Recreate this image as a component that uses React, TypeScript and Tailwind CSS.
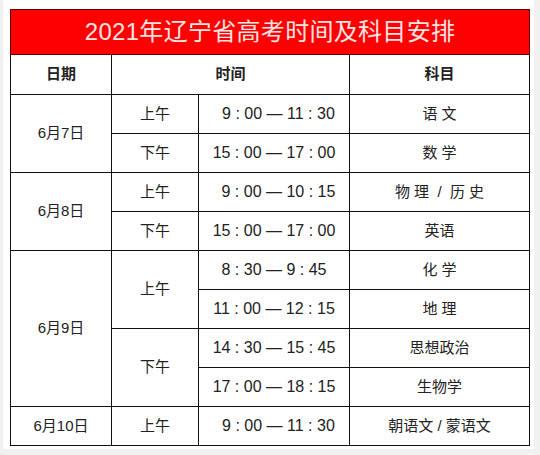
const rows: { date?: string; dateSpan?: number; half?: string; halfSpan?: number; time: string; subject: string }[] = [
  { date: '6月7日', dateSpan: 2, half: '上午', halfSpan: 1, time: '  9 : 00 — 11 : 30', subject: '语 文' },
  { half: '下午', halfSpan: 1, time: '15 : 00 — 17 : 00', subject: '数 学' },
  { date: '6月8日', dateSpan: 2, half: '上午', halfSpan: 1, time: '  9 : 00 — 10 : 15', subject: '物 理  /  历 史' },
  { half: '下午', halfSpan: 1, time: '15 : 00 — 17 : 00', subject: '英语' },
  { date: '6月9日', dateSpan: 4, half: '上午', halfSpan: 2, time: '8 : 30 — 9 : 45', subject: '化 学' },
  { time: '11 : 00 — 12 : 15', subject: '地 理' },
  { half: '下午', halfSpan: 2, time: '14 : 30 — 15 : 45', subject: '思想政治' },
  { time: '17 : 00 — 18 : 15', subject: '生物学' },
  { date: '6月10日', dateSpan: 1, half: '上午', halfSpan: 1, time: '  9 : 00 — 11 : 30', subject: '朝语文 / 蒙语文' },
];

const cell = 'border border-[#111] text-center align-middle p-0';

export default function App() {
  return (
    <div
      className="w-[540px] h-[455px] bg-[#f1f1f1] overflow-hidden"
      style={{ fontFamily: '"Liberation Sans", "Noto Sans CJK SC", sans-serif' }}
    >
      <div className="ml-[3px] w-[531px] h-[449px] bg-white pt-[9px] pl-[7px]">
        <table className="table-fixed border-collapse w-[519px] text-[15px] text-[#222]">
          <colgroup>
            <col className="w-[101px]" />
            <col className="w-[87px]" />
            <col className="w-[151px]" />
            <col className="w-[180px]" />
          </colgroup>
          <thead>
            <tr className="h-[45px]">
              <th
                colSpan={4}
                className="border border-[#600] bg-[#ff0000] text-[#ffe4e4] text-[24px] font-normal tracking-[0.3px] p-0"
              >
                2021年辽宁省高考时间及科目安排
              </th>
            </tr>
            <tr className="h-[40px]">
              <th className={`${cell} font-bold`}>日期</th>
              <th colSpan={2} className={`${cell} font-bold`}>
                时间
              </th>
              <th className={`${cell} font-bold`}>科目</th>
            </tr>
          </thead>
          <tbody>
            {rows.map((r, i) => (
              <tr key={i} className="h-[39px]">
                {r.date && (
                  <td rowSpan={r.dateSpan} className={cell}>
                    {r.date}
                  </td>
                )}
                {r.half && (
                  <td rowSpan={r.halfSpan} className={cell}>
                    {r.half}
                  </td>
                )}
                <td className={`${cell} text-[16px] whitespace-pre`}>{r.time}</td>
                <td className={`${cell} whitespace-pre`}>{r.subject}</td>
              </tr>
            ))}
          </tbody>
        </table>
      </div>
    </div>
  );
}
